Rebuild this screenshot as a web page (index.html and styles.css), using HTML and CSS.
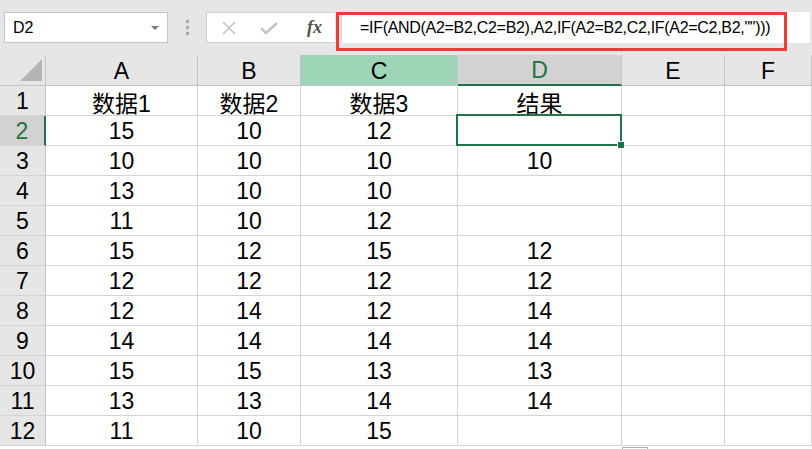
FILE: index.html
```html
<!DOCTYPE html>
<html lang="zh-CN">
<head>
    <meta charset="UTF-8">
    <title>Sheet1</title>
    <link rel="stylesheet" href="styles.css">
</head>
<body>
    <!-- Formula bar -->
    <div class="toolbar">
        <div class="name-box">
            <span>D2</span>
            <span class="caret"></span>
        </div>
        <div class="grip"><i></i><i></i><i></i></div>
        <div class="fx-buttons">
            <svg class="btn-icon" width="16" height="16" viewBox="0 0 16 16">
                <path d="M2 2 L14 14 M14 2 L2 14" stroke="#c2c2c2" stroke-width="1.5" fill="none"/>
            </svg>
            <svg class="btn-icon" width="20" height="16" viewBox="0 0 20 16">
                <path d="M2 8 L7 13 L18 3" stroke="#c2c2c2" stroke-width="2.4" fill="none"/>
            </svg>
            <span class="fx">fx</span>
        </div>
        <div class="formula">=IF(AND(A2=B2,C2=B2),A2,IF(A2=B2,C2,IF(A2=C2,B2,"")))</div>
        <div class="highlight"></div>
    </div>

    <!-- Grid -->
    <div class="sheet">
        <div class="hd corner"><span class="tri"></span></div>
        <div class="hd">A</div>
        <div class="hd">B</div>
        <div class="hd col-hl">C</div>
        <div class="hd col-sel">D</div>
        <div class="hd">E</div>
        <div class="hd">F</div>

        <div class="rh">1</div><div class="c">数据1</div><div class="c">数据2</div><div class="c">数据3</div><div class="c">结果</div><div class="c"></div><div class="c"></div>
        <div class="rh row-sel">2</div><div class="c">15</div><div class="c">10</div><div class="c">12</div><div class="c active"><span class="handle"></span></div><div class="c"></div><div class="c"></div>
        <div class="rh">3</div><div class="c">10</div><div class="c">10</div><div class="c">10</div><div class="c">10</div><div class="c"></div><div class="c"></div>
        <div class="rh">4</div><div class="c">13</div><div class="c">10</div><div class="c">10</div><div class="c"></div><div class="c"></div><div class="c"></div>
        <div class="rh">5</div><div class="c">11</div><div class="c">10</div><div class="c">12</div><div class="c"></div><div class="c"></div><div class="c"></div>
        <div class="rh">6</div><div class="c">15</div><div class="c">12</div><div class="c">15</div><div class="c">12</div><div class="c"></div><div class="c"></div>
        <div class="rh">7</div><div class="c">12</div><div class="c">12</div><div class="c">12</div><div class="c">12</div><div class="c"></div><div class="c"></div>
        <div class="rh">8</div><div class="c">12</div><div class="c">14</div><div class="c">12</div><div class="c">14</div><div class="c"></div><div class="c"></div>
        <div class="rh">9</div><div class="c">14</div><div class="c">14</div><div class="c">14</div><div class="c">14</div><div class="c"></div><div class="c"></div>
        <div class="rh">10</div><div class="c">15</div><div class="c">15</div><div class="c">13</div><div class="c">13</div><div class="c"></div><div class="c"></div>
        <div class="rh">11</div><div class="c">13</div><div class="c">13</div><div class="c">14</div><div class="c">14</div><div class="c"></div><div class="c"></div>
        <div class="rh">12</div><div class="c">11</div><div class="c">10</div><div class="c">15</div><div class="c"></div><div class="c"></div><div class="c"></div>
    </div>

    <!-- paste options button, cut off by the window -->
    <span class="paste"></span>
</body>
</html>
```

FILE: styles.css
```css
/* Spreadsheet screenshot */
html, body {
    margin: 0;
    padding: 0;
    overflow: hidden;
}

body {
    position: relative;
    width: 812px;
    height: 449px;
    background: #ffffff;
    font-family: "Liberation Sans", "Noto Sans CJK SC", sans-serif;
    color: #000;
}

/* ---- formula bar ---- */
.toolbar {
    position: relative;
    display: flex;
    align-items: flex-start;
    height: 55px;
    padding: 12px 0 0 4px;
    box-sizing: border-box;
    background: #e6e6e6;
}

.name-box {
    display: flex;
    align-items: center;
    justify-content: space-between;
    width: 164px;
    height: 31px;
    padding: 0 8px 0 8px;
    box-sizing: border-box;
    background: #fff;
    border: 1px solid #c6c6c6;
    font-size: 16px;
}

.caret {
    width: 0;
    height: 0;
    border-left: 4px solid transparent;
    border-right: 4px solid transparent;
    border-top: 4px solid #7a7a7a;
}

.grip {
    display: flex;
    flex-direction: column;
    gap: 3px;
    margin: 8px 17px 0 18px;
}

.grip i {
    display: block;
    width: 3px;
    height: 3px;
    background: #a8a8a8;
}

.fx-buttons {
    display: flex;
    align-items: center;
    width: 129px;
    height: 31px;
    padding-left: 14px;
    box-sizing: border-box;
    background: #fff;
    border: 1px solid #cfcfcf;
    border-right: none;
}

.btn-icon {
    margin-right: 22px;
}

.btn-icon + .btn-icon {
    margin-right: 28px;
}

.fx {
    font-family: "Liberation Serif", serif;
    font-style: italic;
    font-weight: bold;
    font-size: 18px;
    color: #505050;
}

.formula {
    flex: 1;
    height: 31px;
    margin-right: 2px;
    padding-left: 18px;
    box-sizing: border-box;
    background: #fff;
    border-left: 1px solid #d6d6d6;
    margin-left: 6px;
    font-size: 16px;
    letter-spacing: -0.3px;
    line-height: 31px;
    white-space: nowrap;
    overflow: hidden;
}

.highlight {
    position: absolute;
    left: 336px;
    top: 12px;
    width: 451px;
    height: 39px;
    border: 3px solid #f03a3a;
    box-sizing: border-box;
}

/* ---- grid ---- */
.sheet {
    display: grid;
    grid-template-columns: 46px 152px 103px 157px 164px 103px 1fr;
    grid-template-rows: 31px repeat(12, 30px);
    font-size: 23px;
}

.sheet > div {
    display: flex;
    align-items: center;
    justify-content: center;
    border-right: 1px solid #d4d4d4;
    border-bottom: 1px solid #d4d4d4;
    box-sizing: border-box;
    padding-top: 2px;
}

.hd {
    background: #e6e6e6;
    border-right-color: #c4c4c4 !important;
    border-bottom-color: #c4c4c4 !important;
}

.corner {
    position: relative;
}

.tri {
    position: absolute;
    right: 3px;
    bottom: 4px;
    width: 0;
    height: 0;
    border-left: 22px solid transparent;
    border-bottom: 22px solid #b4b4b4;
}

.col-hl {
    background: #9fd5b7;
}

.col-sel {
    background: #d2d2d2;
    color: #217346;
    border-bottom: 2px solid #217346 !important;
}

.rh {
    background: #e6e6e6;
    border-right-color: #c4c4c4 !important;
    border-bottom-color: #d4d4d4 !important;
}

.row-sel {
    background: #d2d2d2;
    color: #217346;
    border-right: 2px solid #217346 !important;
}

.active {
    position: relative;
}

.active::after {
    content: "";
    position: absolute;
    left: -2px;
    top: -2px;
    right: -1px;
    bottom: -1px;
    border: 2px solid #217346;
}

.handle {
    position: absolute;
    right: -4px;
    bottom: -4px;
    width: 6px;
    height: 6px;
    background: #217346;
    border: 1px solid #fff;
    z-index: 2;
}

.paste {
    position: absolute;
    left: 622px;
    top: 447px;
    width: 24px;
    height: 12px;
    background: #fff;
    border: 1px solid #b0b0b0;
}
```
